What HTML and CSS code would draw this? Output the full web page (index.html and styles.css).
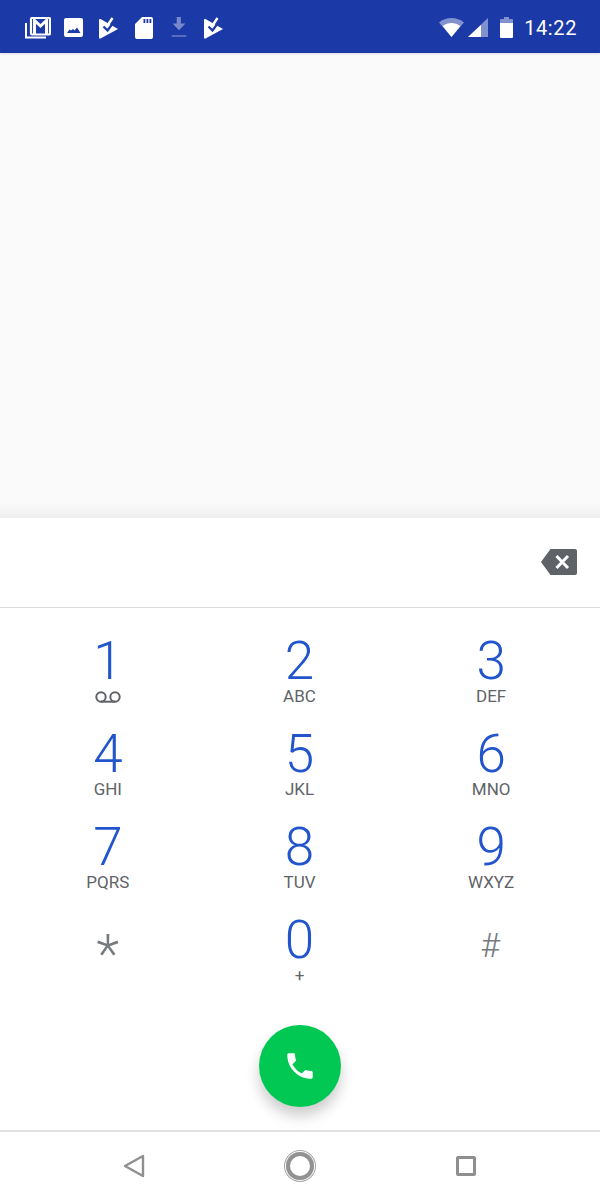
FILE: index.html
```html
<!DOCTYPE html>
<html lang="en">
<head>
<meta charset="utf-8">
<title>Phone dialer</title>
<link rel="stylesheet" href="styles.css">
</head>
<body>
<div class="screen">
  <header class="status">
    <div class="status-left">
      <svg class="i26" viewBox="0 0 26 22"><path fill="none" stroke="#fff" stroke-width="2" d="M1 6v14.500h20"/><rect x="6" y="1" width="19" height="16.500" rx="1" fill="none" stroke="#fff" stroke-width="2.200"/><path fill="none" stroke="#fff" stroke-width="3" d="M9.500 17V3.500l6 5.500 6-5.500V17"/></svg>
      <svg class="i20" viewBox="0 0 20 20"><path fill="#fff" fill-rule="evenodd" d="M2 0h15q2 0 2 2v15q0 2-2 2H2q-2 0-2-2V2q0-2 2-2zM3 15h13.500l-3.500-5.500-2.500 3-1.500-1.500-2 1.500-1.500-1z"/></svg>
      <svg class="i20" viewBox="0 0 20 22"><path fill="#fff" d="M1.500 2 19 12 1.500 21.500Q0 22 0 20.500V3Q0 1.500 1.500 2z"/><path fill="none" stroke="#1c39a8" stroke-width="2.200" d="M4.500 9.500 8.500 13.500 14 6"/><path fill="none" stroke="#fff" stroke-width="2.400" d="M8.500 8.500 13.500 1"/></svg>
      <svg class="i20" viewBox="0 0 18 22"><path fill="#fff" fill-rule="evenodd" d="M7 0h9q2 0 2 2v18q0 2-2 2H2q-2 0-2-2V7zM8.500 2v4h1.800V2zM11.500 2v4h1.800V2zM14.500 2v4h1.800V2z"/></svg>
      <svg class="i20 dim" viewBox="0 0 18 24"><path fill="#fff" d="M6.500 0h4.500v7h5L9 14.500 2 7h4.500z"/><path fill="#fff" d="M1 20h16v1.400H1z"/></svg>
      <svg class="i20" viewBox="0 0 20 22"><path fill="#fff" d="M1.500 2 19 12 1.500 21.500Q0 22 0 20.500V3Q0 1.500 1.500 2z"/><path fill="none" stroke="#1c39a8" stroke-width="2.200" d="M4.500 9.500 8.500 13.500 14 6"/><path fill="none" stroke="#fff" stroke-width="2.400" d="M8.500 8.500 13.500 1"/></svg>
    </div>
    <div class="status-right">
      <svg class="wifi" viewBox="0 0 25 19"><path fill="#fff" opacity=".45" d="M12.500 0C7.800 0 3.600 1.700 0 4.500L12.500 19 25 4.500C21.400 1.700 17.200 0 12.500 0z"/><path fill="#fff" d="M12.500 5C9.300 5 6.200 6.100 3.700 8L12.500 19 21.300 8C18.800 6.100 15.700 5 12.500 5z"/></svg>
      <svg class="signal" viewBox="0 0 20 19"><path fill="#fff" opacity=".45" d="M20 0v19H0z"/><path fill="#fff" d="M13 7v12H0z"/></svg>
      <svg class="battery" viewBox="0 0 13 21"><path fill="#fff" opacity=".45" d="M4 0h5v2h3q1 0 1 1v5H0V3q0-1 1-1h3z"/><path fill="#fff" d="M0 6h13v14q0 1-1 1H1q-1 0-1-1z"/></svg>
      <span class="time">14:22</span>
    </div>
  </header>

  <div class="empty"></div>

  <section class="dialer">
    <div class="entry">
      <svg class="backspace" viewBox="0 0 36 26"><path fill="#5f6368" d="M9.500 0H34q2 0 2 2v22q0 2-2 2H9.500L0 13z"/><path fill="none" stroke="#fff" stroke-width="3" d="M15.500 7 27 19M27 7 15.500 19"/></svg>
    </div>

    <div class="keypad">
      <div class="key"><span class="digit">1</span><svg class="voicemail" viewBox="0 0 26 12"><circle cx="6" cy="6" r="4.700" fill="none" stroke="#5f6368" stroke-width="2"/><circle cx="20" cy="6" r="4.700" fill="none" stroke="#5f6368" stroke-width="2"/><path stroke="#5f6368" stroke-width="2" d="M6 10.700h14"/></svg></div>
      <div class="key"><span class="digit">2</span><span class="letters">ABC</span></div>
      <div class="key"><span class="digit">3</span><span class="letters">DEF</span></div>
      <div class="key"><span class="digit">4</span><span class="letters">GHI</span></div>
      <div class="key"><span class="digit">5</span><span class="letters">JKL</span></div>
      <div class="key"><span class="digit">6</span><span class="letters">MNO</span></div>
      <div class="key"><span class="digit">7</span><span class="letters">PQRS</span></div>
      <div class="key"><span class="digit">8</span><span class="letters">TUV</span></div>
      <div class="key"><span class="digit">9</span><span class="letters">WXYZ</span></div>
      <div class="key"><span class="digit symbol star">*</span></div>
      <div class="key"><span class="digit">0</span><span class="letters plus">+</span></div>
      <div class="key"><span class="digit symbol hash">#</span></div>
    </div>

    <div class="call-row">
      <button class="call" type="button" aria-label="Call">
        <svg viewBox="0 0 24 24"><path fill="#fff" d="M6.620 10.790c1.440 2.830 3.760 5.140 6.590 6.590l2.200-2.200c.27-.27.67-.36 1.020-.24 1.120.37 2.330.57 3.570.57.550 0 1 .45 1 1V20c0 .55-.45 1-1 1C10.610 21 3 13.390 3 4c0-.55.450-1 1-1h3.500c.55 0 1 .45 1 1 0 1.250.2 2.450.57 3.570.11.350.03.740-.25 1.020z"/></svg>
      </button>
    </div>
  </section>

  <nav class="navbar">
    <svg class="nav-back" viewBox="0 0 22 24"><path fill="none" stroke="#8f8f8f" stroke-width="2.400" stroke-linejoin="round" d="M20 2v20L2 12z"/></svg>
    <span class="nav-home"></span>
    <span class="nav-recent"></span>
  </nav>
</div>
</body>
</html>
```
FILE: styles.css
```css
* {
  box-sizing: border-box;
}

html,
body {
  margin: 0;
  padding: 0;
}

body {
  width: 600px;
  height: 1200px;
  overflow: hidden;
  background: #fff;
  font-family: Roboto, "Liberation Sans", sans-serif;
}

.screen {
  display: flex;
  flex-direction: column;
  height: 1200px;
}

.status {
  flex: 0 0 53px;
  display: flex;
  justify-content: space-between;
  align-items: center;
  padding: 2px 23px 0 25px;
  background: #1c39a8;
  box-shadow: 0 1px 2px rgba(0, 0, 0, .12);
  position: relative;
}

.status-left {
  display: flex;
  align-items: center;
  gap: 15px;
}

.status-right {
  display: flex;
  align-items: center;
}

.i26 {
  width: 26px;
  height: 22px;
  margin-right: -2px;
}

.i20 {
  width: 20px;
  height: 22px;
}

.dim {
  opacity: .4;
}

.wifi {
  width: 25px;
  height: 19px;
  margin-right: 4px;
}

.signal {
  width: 20px;
  height: 19px;
  margin-right: 12px;
}

.battery {
  width: 13px;
  height: 21px;
  margin-right: 11px;
}

.time {
  color: #fff;
  font-size: 20px;
  line-height: 24px;
  letter-spacing: .6px;
}

.empty {
  flex: 0 0 465px;
  background: linear-gradient(to bottom, #fafafa 0, #fafafa 450px, #eeeeee 465px);
}

.dialer {
  flex: 0 0 612px;
  display: flex;
  flex-direction: column;
  background: #fff;
}

.entry {
  flex: 0 0 90px;
  display: flex;
  justify-content: flex-end;
  align-items: center;
  padding: 0 23px 2px 0;
  border-bottom: 1px solid #dcdcdc;
}

.backspace {
  width: 36px;
  height: 26px;
}

.keypad {
  display: grid;
  grid-template-columns: repeat(3, 1fr);
  grid-auto-rows: 93px;
  padding: 26px 13px 0 12px;
}

.key {
  display: flex;
  flex-direction: column;
  align-items: center;
}

.digit {
  color: #2255cc;
  font-size: 53px;
  font-weight: 300;
  line-height: 54px;
  height: 54px;
}

.letters {
  color: #5f6368;
  font-size: 17px;
  line-height: 20px;
  margin-top: -2px;
}

.plus {
  font-size: 17px;
}

.voicemail {
  width: 26px;
  height: 12px;
  margin-top: 3px;
}

.symbol {
  color: #76797e;
  font-weight: 300;
}

.star {
  font-size: 53px;
  margin-top: 14px;
}

.hash {
  font-size: 34px;
  margin-top: 5px;
  margin-right: 2px;
}

.call-row {
  display: flex;
  justify-content: center;
  padding-top: 19px;
}

.call {
  width: 82px;
  height: 82px;
  padding: 0;
  border: 0;
  border-radius: 50%;
  display: flex;
  justify-content: center;
  align-items: center;
  background: #00c853;
  box-shadow: 0 9px 14px rgba(0, 0, 0, .2);
}

.call svg {
  width: 34px;
  height: 34px;
}

.navbar {
  flex: 1;
  display: grid;
  grid-template-columns: repeat(3, 165.500px);
  justify-content: center;
  justify-items: center;
  align-items: center;
  border-top: 2px solid #e0e0e0;
  background: #fff;
  position: relative;
}

.nav-back {
  width: 22px;
  height: 24px;
  margin-right: 2px;
}

.nav-home {
  width: 28px;
  height: 28px;
  border-radius: 50%;
  border: 4px solid #929292;
  box-shadow: 0 0 0 1px #fff, 0 0 0 2px #a8a8a8;
}

.nav-recent {
  width: 20px;
  height: 20px;
  border: 3px solid #8f8f8f;
  border-radius: 2px;
}
```
